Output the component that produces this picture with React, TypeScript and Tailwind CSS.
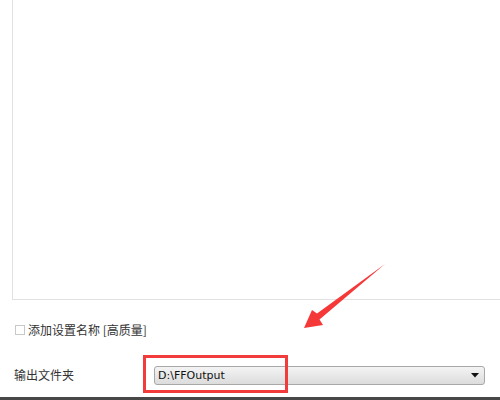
import React from "react";

export default function App() {
  return (
    <div
      className="relative w-[500px] h-[400px] bg-white overflow-hidden flex flex-col"
      style={{ fontFamily: '"Noto Sans CJK SC", "Liberation Sans", sans-serif' }}
    >
      <div className="ml-[12px] h-[300px] border-l border-b border-[#e2e2e2] shrink-0" />
      <div className="flex items-center h-[20px] mt-[20px] ml-[15px]">
        <div className="w-[10px] h-[10px] border border-[#c8c8c8] bg-white" />
        <span className="ml-[3px] text-[12px] leading-none text-[#333]">添加设置名称 [高质量]</span>
      </div>
      <div className="flex items-center mt-[25px] h-[20px]">
        <span className="ml-[14px] w-[140px] text-[12px] leading-none text-[#333]">输出文件夹</span>
        <div className="ml-[0px] w-[331px] h-[19px] rounded-[3px] border border-[#a8a8a8] bg-gradient-to-b from-[#f4f4f4] to-[#dcdcdc] flex items-center justify-between px-[3px]">
          <span className="text-[11px] leading-none text-[#111]" style={{ fontFamily: '"DejaVu Sans", sans-serif' }}>D:\FFOutput</span>
          <svg width="8" height="5" viewBox="0 0 8 5" className="mr-[2px]">
            <path d="M0 0 H8 L4 4.5 Z" fill="#111" />
          </svg>
        </div>
      </div>
      <div className="absolute left-0 bottom-0 w-full h-[3px] bg-[#474747]" />
      <div className="absolute left-[143px] top-[355px] w-[145px] h-[38px] border-[3px] border-[#f23b3b]" />
      <svg className="absolute left-0 top-0" width="500" height="400" viewBox="0 0 500 400">
        <path
          d="M385 264 L317 313.5 L312 310 L304 328 L323 325 L319.5 319.5 Z"
          fill="#f53838"
        />
      </svg>
    </div>
  );
}
